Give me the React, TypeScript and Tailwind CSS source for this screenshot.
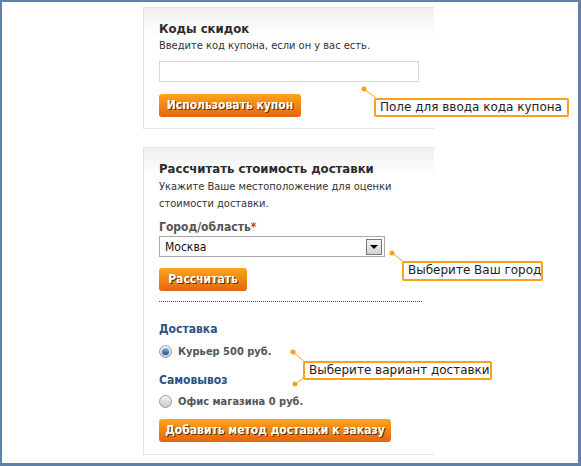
import React from 'react'

const font = "font-['Tahoma','DejaVu_Sans_Condensed','Liberation_Sans',sans-serif]"

const OrangeButton = ({ label, w }: { label: string; w: string }) => (
  <button
    className={`${w} h-[23px] rounded-[3px] bg-gradient-to-b from-[#fba51c] to-[#e5640f] text-white text-[12px] font-bold [text-shadow:1px_1px_0_#5a3000] text-center leading-[23px]`}
  >
    {label}
  </button>
)

const Radio = ({ checked }: { checked?: boolean }) => (
  <span className="w-[13px] h-[13px] rounded-full border border-[#9a9a9a] bg-gradient-to-b from-[#f4f4f4] to-[#c9c9c9] flex items-center justify-center">
    {checked && <span className="w-[7px] h-[7px] rounded-full bg-gradient-to-b from-[#7fc0f0] to-[#0d4f8f]" />}
  </span>
)

const Callout = ({ text, cls }: { text: string; cls: string }) => (
  <div className={`absolute ${cls} border-2 border-[#f7a11e] rounded-[2px] bg-white text-[#222] text-[12px] leading-[15px] px-[4px] whitespace-nowrap font-['DejaVu_Sans',sans-serif]`}>
    {text}
  </div>
)

export default function App() {
  return (
    <div className={`relative w-[581px] h-[466px] bg-white border-t-2 border-l-2 border-r-[3px] border-b-[3px] border-[#5f82ab] ${font} text-[#333]`}>
      <div className="ml-[141px] mt-[5px] flex flex-col gap-[18px] w-[291px]">
        <section className="border-l border-t border-b border-[#e4e4e4] bg-gradient-to-b from-[#f1f1f1] to-white to-[30px] px-[15px] pt-[13px] pb-[11px]">
          <h2 className="text-[13px] font-bold leading-[16px] text-[#2b2b2b]">Коды скидок</h2>
          <p className="text-[11px] leading-[14px] mt-[2px]">Введите код купона, если он у вас есть.</p>
          <div className="mt-[8px] w-[260px] h-[21px] border border-[#d9d9d9] bg-white" />
          <div className="mt-[10px]">
            <OrangeButton label="Использовать купон" w="w-[142px]" />
          </div>
        </section>

        <section className="border-l border-t border-b border-[#e4e4e4] bg-gradient-to-b from-[#f1f1f1] to-white to-[30px] px-[15px] pt-[13px] pb-[12px]">
          <h2 className="text-[13px] font-bold leading-[16px] text-[#2b2b2b]">Рассчитать стоимость доставки</h2>
          <p className="text-[11px] leading-[17px] mt-[1px] w-[240px]">Укажите Ваше местоположение для оценки стоимости доставки.</p>
          <div className="mt-[8px] text-[12px] font-bold text-[#555] leading-[15px]">
            Город/область<span className="text-[#e03010]">*</span>
          </div>
          <div className="mt-[1px] w-[226px] h-[21px] border border-[#a9a9a9] bg-white flex items-center justify-between pl-[5px] pr-[2px]">
            <span className="text-[12px] text-[#111]">Москва</span>
            <span className="w-[16px] h-[16px] border border-[#777] bg-gradient-to-b from-[#f4f4f4] to-[#d4d4d4] flex items-center justify-center">
              <span className="w-0 h-0 border-l-[4px] border-r-[4px] border-t-[4px] border-l-transparent border-r-transparent border-t-black" />
            </span>
          </div>
          <div className="mt-[9px]">
            <OrangeButton label="Рассчитать" w="w-[88px]" />
          </div>
          <div className="mt-[10px] w-[263px] border-t border-dotted border-[#555]" />
          <h3 className="mt-[20px] text-[12px] font-bold text-[#2a5486] leading-[15px]">Доставка</h3>
          <label className="mt-[7px] flex items-center gap-[6px] text-[11px] font-bold text-[#555] leading-[15px]">
            <Radio checked />
            Курьер 500 руб.
          </label>
          <h3 className="mt-[14px] text-[12px] font-bold text-[#2a5486] leading-[15px]">Самовывоз</h3>
          <label className="mt-[6px] flex items-center gap-[6px] text-[11px] font-bold text-[#555] leading-[15px]">
            <Radio />
            Офис магазина 0 руб.
          </label>
          <div className="mt-[8px]">
            <OrangeButton label="Добавить метод доставки к заказу" w="w-[232px]" />
          </div>
        </section>
      </div>

      <svg className="absolute left-[-2px] top-[-2px]" width="581" height="466">
        <g stroke="#f7a11e" strokeWidth="1" fill="none">
          <line x1="364" y1="89" x2="376" y2="98" />
          <line x1="392" y1="253" x2="404" y2="262" />
          <line x1="293" y1="352" x2="305" y2="362" />
          <line x1="295" y1="384" x2="305" y2="377" />
        </g>
        <g fill="#f7a11e">
          <circle cx="364" cy="89" r="2.5" />
          <circle cx="392" cy="253" r="2.5" />
          <circle cx="293" cy="352" r="2.5" />
          <circle cx="295" cy="384" r="2.5" />
        </g>
      </svg>

      <Callout text="Поле для ввода кода купона" cls="left-[372px] top-[96px] w-[195px] h-[19px]" />
      <Callout text="Выберите Ваш город" cls="left-[400px] top-[259px] w-[141px] h-[20px]" />
      <Callout text="Выберите вариант доставки" cls="left-[301px] top-[359px] w-[189px] h-[19px]" />
    </div>
  )
}
